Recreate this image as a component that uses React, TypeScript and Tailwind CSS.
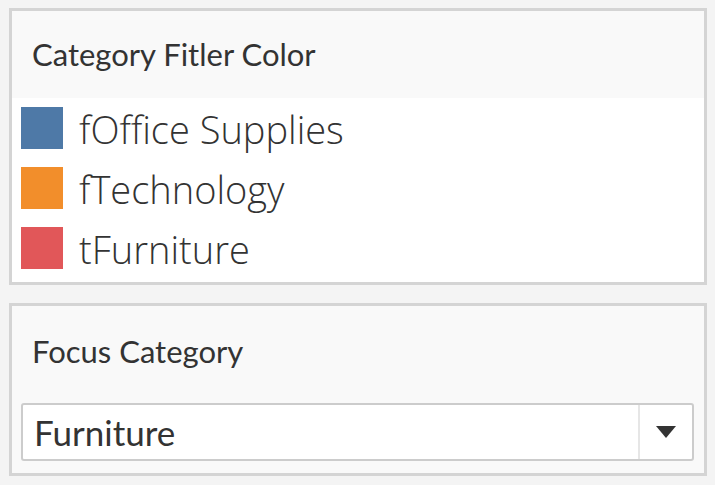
const items = [
  { label: "fOffice Supplies", color: "bg-[#4e79a7]" },
  { label: "fTechnology", color: "bg-[#f28e2b]" },
  { label: "tFurniture", color: "bg-[#e15759]" },
]

export default function App() {
  return (
    <div className="w-[715px] h-[485px] bg-[#f4f4f4] pt-[8px] pl-[9px] pr-[8px] flex flex-col gap-[18px] font-['Lato',sans-serif] text-[#333]">
      <div className="border-[3px] border-[#d4d4d4] h-[277px] flex flex-col">
        <div className="h-[87px] bg-[#f9f9f9] pl-[20px] flex items-center">
          <span className="text-[31px] leading-none">Category Fitler Color</span>
        </div>
        <div className="flex-1 bg-white pl-[9px] pt-[9px] flex flex-col gap-[18px]">
          {items.map((it) => (
            <div key={it.label} className="flex items-center gap-[16px] h-[42px]">
              <div className={`w-[42px] h-[42px] ${it.color}`} />
              <span className="font-['Open_Sans',sans-serif] font-light text-[38px] leading-none text-[#333] pt-[2px]">{it.label}</span>
            </div>
          ))}
        </div>
      </div>
      <div className="border-[3px] border-[#d4d4d4] h-[173px] bg-[#f9f9f9] flex flex-col">
        <div className="h-[97px] pl-[20px] pt-[30px]">
          <span className="text-[31px] leading-none">Focus Category</span>
        </div>
        <div className="ml-[9px] mr-[10px] h-[58px] border-2 border-[#cccccc] rounded-[3px] bg-white flex">
          <div className="flex-1 flex items-center pl-[11px] text-[35px] leading-none">Furniture</div>
          <div className="w-[54px] border-l-2 border-[#e6e6e6] flex items-center justify-center">
            <svg width="20" height="12" viewBox="0 0 20 12">
              <path d="M0 0 L20 0 L10 12 Z" fill="#333" />
            </svg>
          </div>
        </div>
      </div>
    </div>
  )
}
